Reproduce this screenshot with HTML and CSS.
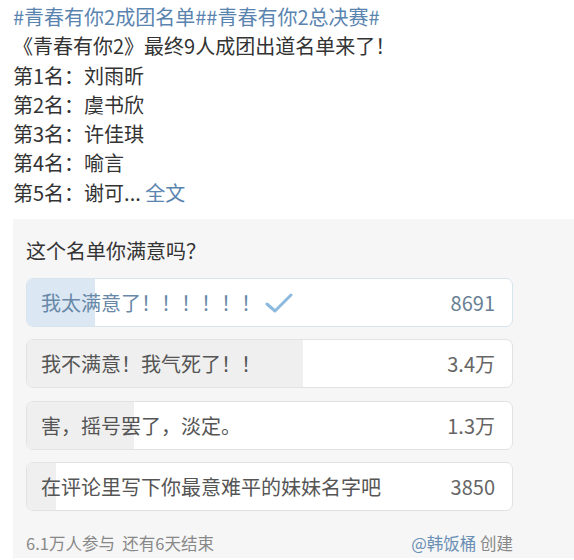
FILE: index.html
```html
<!DOCTYPE html>
<html lang="zh-CN">
<head>
    <meta charset="UTF-8">
    <title>青春有你2 投票</title>
    <link rel="stylesheet" href="styles.css">
</head>
<body>
    <div class="post">
        <p class="line"><span class="topic">#青春有你2成团名单##青春有你2总决赛#</span></p>
        <p class="line">《青春有你2》最终9人成团出道名单来了！</p>
        <p class="line">第1名：刘雨昕</p>
        <p class="line">第2名：虞书欣</p>
        <p class="line">第3名：许佳琪</p>
        <p class="line">第4名：喻言</p>
        <p class="line">第5名：谢可... <span class="topic">全文</span></p>
    </div>

    <div class="vote-card">
        <h2 class="vote-title">这个名单你满意吗？</h2>

        <div class="options">
            <div class="option chosen">
                <div class="fill" style="width: 14%"></div>
                <span class="label">我太满意了！！！！！！
                    <svg class="check" width="28" height="22" viewBox="0 0 28 22">
                        <path d="M2 12 L10 19 L26 3" fill="none" stroke="#8db9de" stroke-width="3" stroke-linecap="round" stroke-linejoin="round"/>
                    </svg>
                </span>
                <span class="count">8691</span>
            </div>
            <div class="option">
                <div class="fill" style="width: 57%"></div>
                <span class="label">我不满意！我气死了！！</span>
                <span class="count">3.4万</span>
            </div>
            <div class="option">
                <div class="fill" style="width: 22%"></div>
                <span class="label">害，摇号罢了，淡定。</span>
                <span class="count">1.3万</span>
            </div>
            <div class="option">
                <div class="fill" style="width: 6%"></div>
                <span class="label">在评论里写下你最意难平的妹妹名字吧</span>
                <span class="count">3850</span>
            </div>
        </div>

        <div class="vote-footer">
            <span>6.1万人参与&nbsp;&nbsp;还有6天结束</span>
            <span><span class="author">@韩饭桶</span> 创建</span>
        </div>
    </div>
</body>
</html>
```

FILE: styles.css
```css
/* General Styling */
body {
    margin: 0;
    padding: 0;
    background-color: #fff;
    color: #333;
    font-family: "Noto Sans CJK SC", "Noto Sans", sans-serif;
    overflow: hidden;
}

.post {
    padding: 2px 0 0 13px;
}

.line {
    margin: 0;
    font-size: 20px;
    line-height: 29.3px;
    color: #333;
}

.topic {
    color: #5a84b0;
}

.vote-card {
    margin: 12px 0 0 13px;
    padding: 18px 61px 4px 13px;
    background-color: #f6f6f6;
}

.vote-title {
    margin: 0;
    font-size: 20px;
    font-weight: normal;
    line-height: 28px;
    color: #333;
}

.options {
    display: flex;
    flex-direction: column;
    gap: 12.3px;
    margin-top: 13px;
}

.option {
    position: relative;
    display: flex;
    align-items: center;
    justify-content: space-between;
    height: 47px;
    padding: 0 17px 0 14px;
    background-color: #fff;
    border: 1px solid #e2e2e2;
    border-radius: 7px;
    overflow: hidden;
    font-size: 20px;
    color: #555;
}

.option .fill {
    position: absolute;
    left: 0;
    top: 0;
    bottom: 0;
    background-color: #efefef;
}

.option .label,
.option .count {
    position: relative;
    display: flex;
    align-items: center;
}

.option .count {
    color: #666;
}

.option.chosen {
    border-color: #d6e4ee;
    color: #6888a8;
}

.option.chosen .fill {
    background-color: #dbe7f3;
}

.option.chosen .count {
    color: #6a7f94;
}

.check {
    margin-left: 4px;
}

.vote-footer {
    display: flex;
    justify-content: space-between;
    margin-top: 21px;
    font-size: 16.5px;
    line-height: 22px;
    color: #888;
}

.author {
    color: #6a8fb5;
}
```
